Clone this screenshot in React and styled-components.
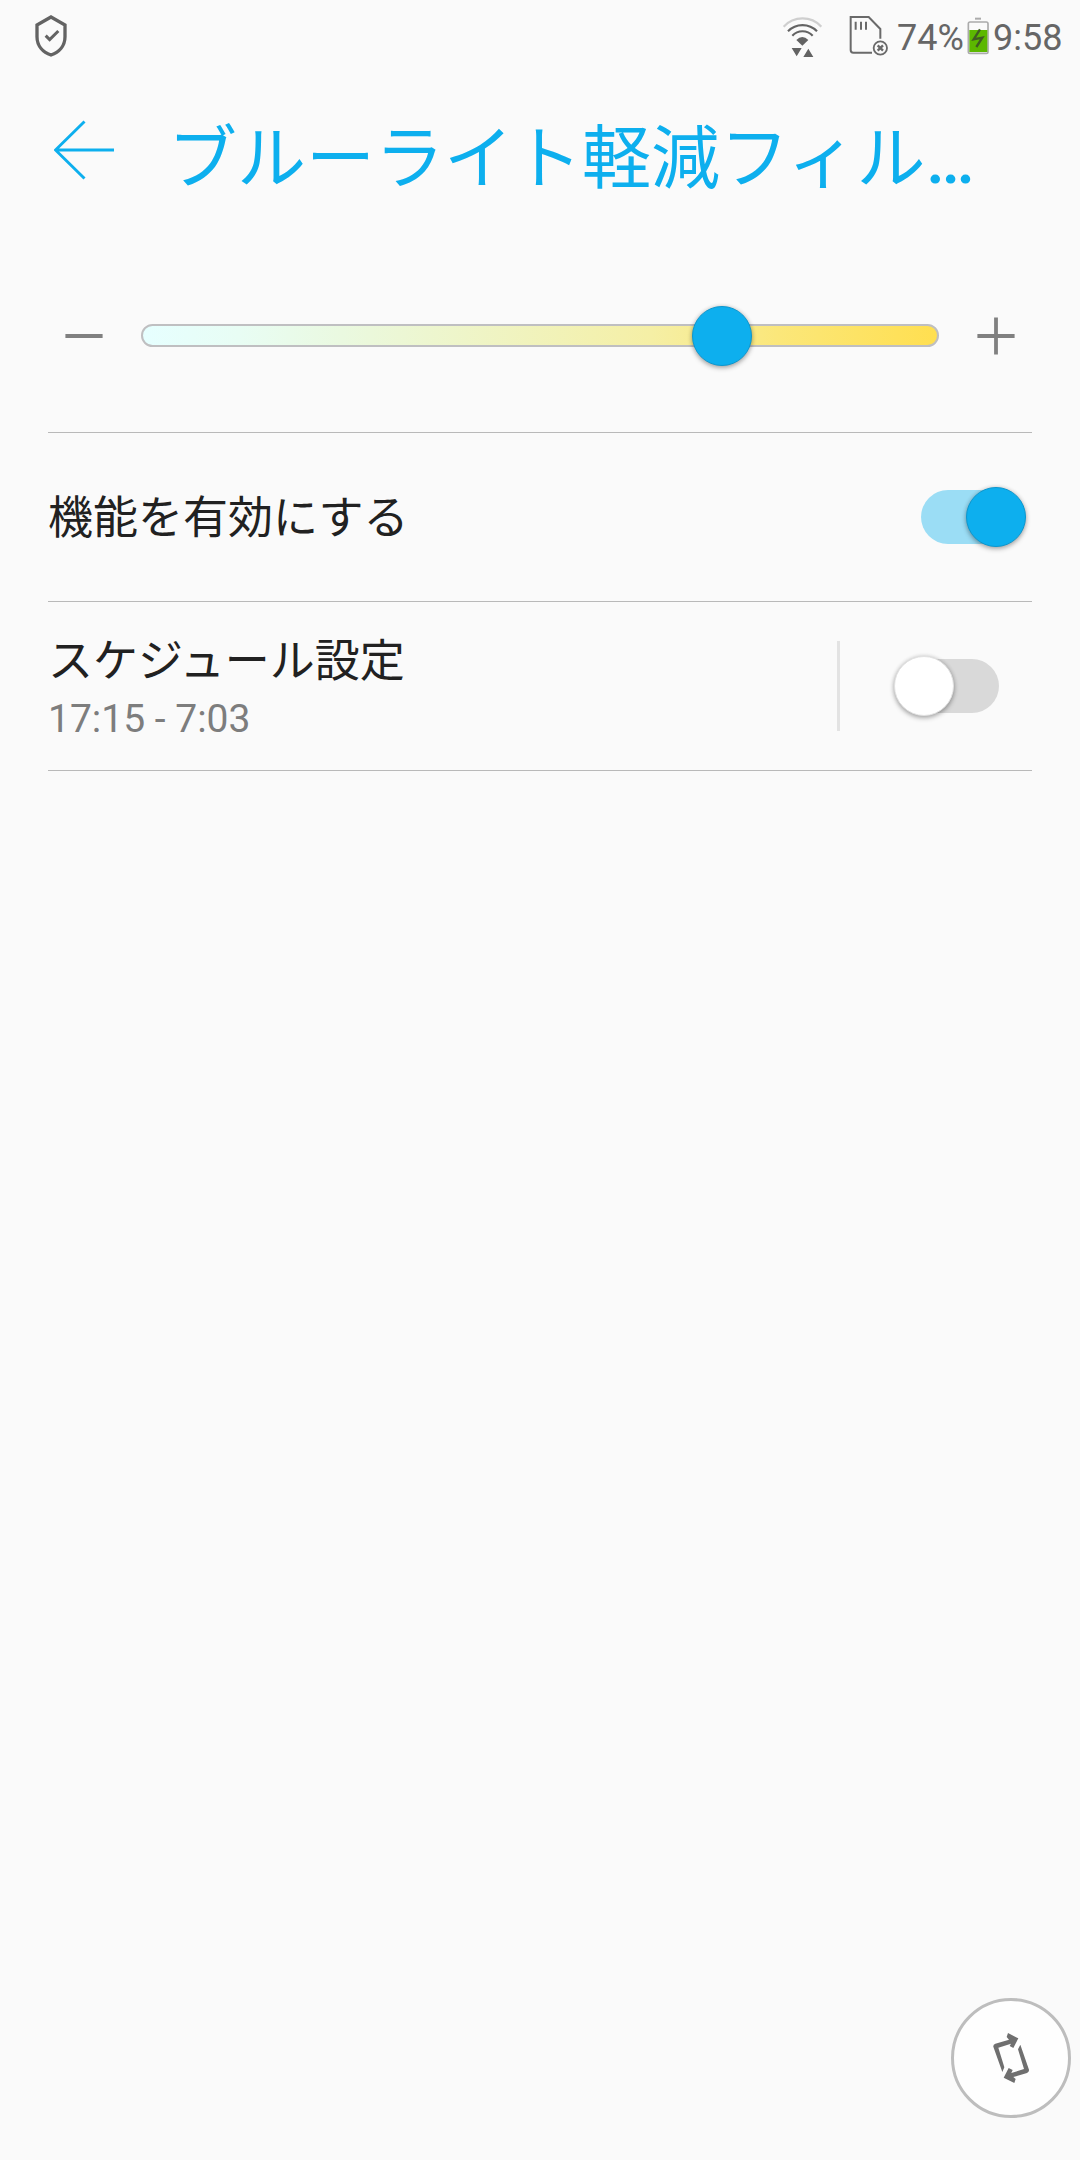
import React, { useState } from "react";
import styled, { createGlobalStyle } from "styled-components";

const ACCENT = "#0dafee";

const GlobalStyle = createGlobalStyle`
  *, *::before, *::after { box-sizing: border-box; }
  body {
    margin: 0;
    background: #fafafa;
    font-family: Roboto, "Noto Sans CJK JP", sans-serif;
  }
`;

const Screen = styled.main`
  position: relative;
  display: flex;
  flex-direction: column;
  width: 1080px;
  height: 2160px;
  overflow: hidden;
  background: #fafafa;
`;

const StatusBar = styled.div`
  display: flex;
  align-items: flex-start;
  height: 72px;
  padding: 0 18px 0 34px;
  color: #666666;
`;

const StatusIcon = styled.svg`
  flex: none;
  display: block;
  margin-top: ${(p) => p.$top}px;
  margin-left: ${(p) => p.$left || 0}px;
`;

const Spacer = styled.div`
  flex: 1;
`;

const StatusText = styled.span`
  flex: none;
  width: ${(p) => p.$width}px;
  margin-left: ${(p) => p.$left}px;
  font-size: 36px;
  line-height: 76px;
  white-space: nowrap;
`;

const Header = styled.header`
  display: flex;
  align-items: center;
  height: 156px;
  padding: 0 48px 0 54px;
`;

const BackButton = styled.button`
  flex: none;
  display: flex;
  padding: 0;
  border: 0;
  background: none;
`;

const Title = styled.h1`
  margin: 20px 0 0 52px;
  color: ${ACCENT};
  font-size: 69px;
  font-weight: 400;
  line-height: 90px;
  white-space: nowrap;
`;

const Ellipsis = styled.span`
  font-weight: 500;
`;

const SliderSection = styled.section`
  display: flex;
  align-items: flex-start;
  height: 205px;
  margin: 0 48px;
  padding: 89px 17px 0;
  border-bottom: 1px solid #b9b9b9;
`;

const StepButton = styled.button`
  flex: none;
  display: flex;
  padding: 0;
  border: 0;
  background: none;
`;

const Track = styled.div`
  position: relative;
  flex: 1;
  height: 23px;
  margin: 7px 38px 0;
  border: 2px solid #bfbfc1;
  border-radius: 12px;
  background: linear-gradient(
    90deg,
    #e6ffff 0%,
    #e8fdf4 12%,
    #eaf9e0 25%,
    #f5efa5 64%,
    #fbe77a 80%,
    #ffdf50 100%
  );
`;

const Thumb = styled.span`
  position: absolute;
  width: 60px;
  height: 60px;
  border-radius: 50%;
  border: 1px solid ${(p) => (p.$on ? "#0b97cf" : "#e2e2e2")};
  background: ${(p) => (p.$on ? ACCENT : "#ffffff")};
  box-shadow: 0 2px 5px rgba(0, 0, 0, 0.3), 0 0 4px rgba(0, 0, 0, 0.12);
`;

const SliderThumb = styled(Thumb)`
  top: -20px;
  margin-left: -30px;
`;

const Row = styled.section`
  display: flex;
  align-items: center;
  height: 169px;
  margin: 0 48px;
  border-bottom: 1px solid #b9b9b9;
`;

const RowText = styled.div`
  flex: 1;
  padding-top: ${(p) => p.$top}px;
`;

const RowTitle = styled.div`
  color: #212121;
  font-size: 45px;
  line-height: 60px;
`;

const RowSummary = styled.div`
  color: #7d7d7d;
  font-size: 39px;
  line-height: 54px;
`;

const Separator = styled.span`
  width: 3px;
  height: 90px;
  margin: 0 57px 0 0;
  background: #e3e3e3;
`;

const Switch = styled.button`
  position: relative;
  flex: none;
  width: 102px;
  height: 54px;
  margin-right: ${(p) => p.$end}px;
  padding: 0;
  border: 0;
  border-radius: 27px;
  background: ${(p) => (p.$on ? "#9bddf5" : "#d9d9d9")};
`;

const SwitchThumb = styled(Thumb)`
  top: -3px;
  left: ${(p) => (p.$on ? 45 : -3)}px;
`;

const RotateButton = styled.button`
  position: absolute;
  left: 951px;
  top: 1998px;
  width: 120px;
  height: 120px;
  padding: 0;
  border: 3px solid #bdbdbd;
  border-radius: 50%;
  background: #fefefe;
`;

const RotateIcon = styled.svg`
  display: block;
  margin: -3px;
`;

function ShieldIcon() {
  return (
    <StatusIcon $top={14} width="34" height="44" viewBox="102 42 102 132" fill="none" stroke="#636363">
      <path d="M153 51 L195 75 V110 C195 138 176 157 153 165 C130 157 111 138 111 110 V75 Z" strokeWidth="10" />
      <path d="M137 107 L149 119 L175 93" strokeWidth="9" />
    </StatusIcon>
  );
}

function WifiIcon() {
  return (
    <StatusIcon $top={16} width="40" height="42" viewBox="66 48 120 126" fill="none" stroke="#636363" strokeWidth="6.5">
      <path d="M71 80 A77 77 0 0 1 184 80" stroke="#cfcfcf" />
      <path d="M84 94 A60 60 0 0 1 171 94" />
      <path d="M97 107 A42 42 0 0 1 158 107" />
      <path d="M109 120 Q127 102 145 120 L127 137 Z" fill="#636363" stroke="none" />
      <path d="M95 144 H125 L110 169 Z M130 171 H160 L145 146 Z" fill="#636363" stroke="none" />
    </StatusIcon>
  );
}

function SdCardIcon() {
  return (
    <StatusIcon $left={25} $top={15} width="42" height="42" viewBox="261 45 126 126" fill="none" stroke="#6a6a6a">
      <path d="M336 158 H280 Q272 158 272 150 V51 H326 L361 87 V116" strokeWidth="6" />
      <path d="M287 65 V89 M303 65 V89 M318 65 V89" strokeWidth="6" />
      <circle cx="361" cy="144" r="20" strokeWidth="5.5" />
      <path d="M353 136 L369 152 M369 136 L353 152" strokeWidth="7" />
    </StatusIcon>
  );
}

function BatteryIcon() {
  return (
    <StatusIcon $top={17} width="22" height="38" viewBox="621 51 66 114">
      <rect x="645" y="53" width="18" height="6" fill="#ababab" />
      <rect x="625" y="66" width="59" height="94" rx="5" fill="#fafafa" stroke="#ababab" strokeWidth="5" />
      <rect x="628" y="90" width="54" height="66" fill="#5cb800" />
      <path d="M660 88 L641 118 L667 113 L649 141" fill="none" stroke="#3f5c22" strokeWidth="7" />
    </StatusIcon>
  );
}

function BackIcon() {
  return (
    <svg width="62" height="60" viewBox="0 0 62 60" fill="none" stroke={ACCENT} strokeWidth="2.9">
      <path d="M30.5 1.5 L1.5 30 L30.5 58.5 M2 30 H60" />
    </svg>
  );
}

function StepIcon({ plus }) {
  return (
    <svg width="38" height="38" viewBox="0 0 38 38" stroke="#808080" strokeWidth="3.8">
      <path d={plus ? "M0.4 19 H37.6 M19 0.4 V37.6" : "M0.4 19 H37.6"} />
    </svg>
  );
}

function RotateGlyph() {
  return (
    <RotateIcon width="120" height="120" viewBox="63 53 360 360" fill="none" stroke="#6f6f6f">
      <path d="M190 199 Q189 193 196 190 L237 178 L230 170 L234 158 L265 174 L250 203 L239 197 L243 190 L205 202 L223 261 L217 275 Z" fill="#6f6f6f" stroke="none" />
      <path d="M297 268 Q298 274 291 278 L250 290 L257 296 L253 308 L221 292 L236 263 L248 269 L244 278 L282 266 L264 207 L271 193 Z" fill="#6f6f6f" stroke="none" />
    </RotateIcon>
  );
}

function Toggle({ on, end, label, onToggle }) {
  return (
    <Switch role="switch" aria-checked={on} aria-label={label} $on={on} $end={end} onClick={onToggle}>
      <SwitchThumb $on={on} />
    </Switch>
  );
}

export default function App() {
  const [level, setLevel] = useState(581);
  const [enabled, setEnabled] = useState(true);
  const [scheduled, setScheduled] = useState(false);
  const step = (delta) => setLevel((v) => Math.min(794, Math.max(0, v + delta)));

  return (
    <>
      <GlobalStyle />
      <Screen>
        <StatusBar>
          <ShieldIcon />
          <Spacer />
          <WifiIcon />
          <SdCardIcon />
          <StatusText $left={8} $width={70}>74%</StatusText>
          <BatteryIcon />
          <StatusText $left={4} $width={69}>9:58</StatusText>
        </StatusBar>

        <Header>
          <BackButton>
            <BackIcon />
          </BackButton>
          <Title>
            ブルーライト軽減フィル<Ellipsis>…</Ellipsis>
          </Title>
        </Header>

        <SliderSection>
          <StepButton onClick={() => step(-40)}>
            <StepIcon />
          </StepButton>
          <Track>
            <SliderThumb $on style={{ left: level - 2 }} />
          </Track>
          <StepButton onClick={() => step(40)}>
            <StepIcon plus />
          </StepButton>
        </SliderSection>

        <Row>
          <RowText $top={3}>
            <RowTitle>機能を有効にする</RowTitle>
          </RowText>
          <Toggle on={enabled} end={9} label="機能を有効にする" onToggle={() => setEnabled(!enabled)} />
        </Row>

        <Row>
          <RowText $top={6}>
            <RowTitle>スケジュール設定</RowTitle>
            <RowSummary>17:15 - 7:03</RowSummary>
          </RowText>
          <Separator />
          <Toggle on={scheduled} end={33} label="スケジュール設定" onToggle={() => setScheduled(!scheduled)} />
        </Row>

        <RotateButton>
          <RotateGlyph />
        </RotateButton>
      </Screen>
    </>
  );
}
